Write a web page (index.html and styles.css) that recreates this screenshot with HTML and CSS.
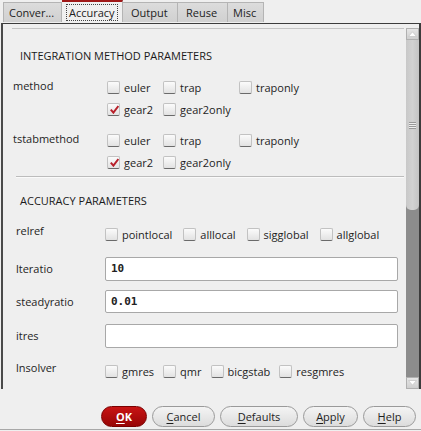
FILE: index.html
```html
<!DOCTYPE html>
<html>
<head>
<meta charset="utf-8">
<link rel="stylesheet" href="styles.css">
</head>
<body>
<div class="dialog">
  <div class="tabs">
    <div class="tab first">Conver...</div>
    <div class="tab active"><span class="focus">Accuracy</span></div>
    <div class="tab">Output</div>
    <div class="tab">Reuse</div>
    <div class="tab">Misc</div>
  </div>
  <div class="frame">
    <div class="viewport">
      <div class="content">
        <div class="title t1">INTEGRATION METHOD PARAMETERS</div>
        <div class="group g1">
          <div class="label">method</div>
          <div class="opts">
            <label class="cb c1"><span class="box"></span>euler</label>
            <label class="cb c2"><span class="box"></span>trap</label>
            <label class="cb c3"><span class="box"></span>traponly</label>
            <label class="cb c1"><span class="box checked"></span>gear2</label>
            <label class="cb c2"><span class="box"></span>gear2only</label>
          </div>
        </div>
        <div class="group g2">
          <div class="label">tstabmethod</div>
          <div class="opts">
            <label class="cb c1"><span class="box"></span>euler</label>
            <label class="cb c2"><span class="box"></span>trap</label>
            <label class="cb c3"><span class="box"></span>traponly</label>
            <label class="cb c1"><span class="box checked"></span>gear2</label>
            <label class="cb c2"><span class="box"></span>gear2only</label>
          </div>
        </div>
        <div class="sep"></div>
        <div class="title t2">ACCURACY PARAMETERS</div>
        <div class="frow relref">
          <div class="label">relref</div>
          <div class="line">
            <label class="cb"><span class="box"></span>pointlocal</label>
            <label class="cb"><span class="box"></span>alllocal</label>
            <label class="cb"><span class="box"></span>sigglobal</label>
            <label class="cb"><span class="box"></span>allglobal</label>
          </div>
        </div>
        <div class="frow field f1">
          <div class="label">lteratio</div>
          <div class="input">10</div>
        </div>
        <div class="frow field f2">
          <div class="label">steadyratio</div>
          <div class="input">0.01</div>
        </div>
        <div class="frow field f3">
          <div class="label">itres</div>
          <div class="input"></div>
        </div>
        <div class="frow lnsolver">
          <div class="label">lnsolver</div>
          <div class="line">
            <label class="cb"><span class="box"></span>gmres</label>
            <label class="cb"><span class="box"></span>qmr</label>
            <label class="cb"><span class="box"></span>bicgstab</label>
            <label class="cb"><span class="box"></span>resgmres</label>
          </div>
        </div>
      </div>
      <div class="scrollbar">
        <div class="arrow up"><svg width="9" height="6" viewBox="0 0 9 6"><path d="M0.5 5.5 L4.5 0.8 L8.5 5.5 Z" fill="#fff" stroke="#c8c8c8" stroke-width="0.8"/></svg></div>
        <div class="track">
          <div class="thumb"><span class="grip"></span></div>
        </div>
        <div class="arrow down"><svg width="9" height="6" viewBox="0 0 9 6"><path d="M0.5 0.5 L4.5 5.2 L8.5 0.5 Z" fill="#fff" stroke="#c8c8c8" stroke-width="0.8"/></svg></div>
      </div>
    </div>
  </div>
  <div class="buttons">
    <button class="btn ok"><u>O</u>K</button>
    <button class="btn cancel"><u>C</u>ancel</button>
    <button class="btn defaults"><u>D</u>efaults</button>
    <button class="btn apply"><u>A</u>pply</button>
    <button class="btn help"><u>H</u>elp</button>
  </div>
  <div class="bottomline"></div>
</div>
</body>
</html>
```

FILE: styles.css
```css
* { box-sizing: border-box; }
html, body { margin: 0; padding: 0; }
body {
  background: #efefef;
  font-family: "Open Sans", "Noto Sans", sans-serif;
  font-size: 11px;
  color: #1e1e1e;
  width: 421px;
  height: 431px;
  overflow: hidden;
}
.dialog { display: flex; flex-direction: column; height: 431px; }

/* tabs */
.tabs {
  display: flex;
  height: 22px;
  padding-left: 3px;
  align-items: flex-end;
}
.tab {
  height: 20px;
  line-height: 19px;
  padding: 0 5px;
  background: linear-gradient(#dcdcdc, #d0d0d0);
  border: 1px solid #b4b4b4;
  border-bottom: none;
  border-left: none;
  color: #222;
}
.tab.first { border-left: 1px solid #b4b4b4; width: 59px; }
.tab.active {
  height: 22px;
  width: 61px;
  background: #f0f0f0;
  border-top: 2px solid #a01818;
  padding: 2px 3px 0 4px;
  line-height: 15px;
}
.focus {
  display: inline-block;
  border: 1px dotted #444;
  padding: 0 2px;
  height: 17px;
}
.tab:nth-child(3) { width: 55px; padding-left: 8px; }
.tab:nth-child(4) { width: 50px; padding-left: 8px; }
.tab:nth-child(5) { width: 36px; padding-left: 5px; }

/* frame */
.frame {
  height: 366px;
  border-top: 1px solid #3c3c3c;
  border-left: 2px solid #4a4a4a;
  border-right: 2px solid #3c3c3c;
  margin-left: 1px;
  padding-top: 4px;
  margin-top: 1px;
}
.viewport { display: flex; height: 361px; }
.content {
  flex: 1;
  border-top: 1px solid #c4c4c4;
  margin-left: 9px;
  padding-top: 18px;
  display: flex;
  flex-direction: column;
}

.title { height: 18px; line-height: 18px; padding-left: 8px; color: #1a1a1a; }
.label { width: 91px; flex: none; line-height: 16px; }

.group { display: flex; padding-left: 1px; }
.g1 { margin-top: 11px; }
.g2 { margin-top: 9px; }
.group .label { padding-top: 2px; }
.opts {
  display: grid;
  grid-template-columns: 56px 76px auto;
  grid-auto-rows: 22px;
  padding-left: 3px;
}

.cb {
  display: flex;
  align-items: center;
  white-space: nowrap;
}
.box {
  width: 13px;
  height: 13px;
  margin-right: 4px;
  border: 1px solid #c2c2c2;
  border-bottom: 1px solid #6a6a6a;
  border-radius: 2px;
  background: linear-gradient(#fbfbfb, #e2e2e2);
  flex: none;
  position: relative;
}
.box.checked::after {
  content: "";
  position: absolute;
  left: 2px;
  top: 1px;
  width: 9px;
  height: 9px;
  background: url("data:image/svg+xml;utf8,<svg xmlns='http://www.w3.org/2000/svg' width='9' height='9' viewBox='0 0 9 9'><path d='M0.8 4.6 L3.4 7.6 L8.4 1' fill='none' stroke='%23b8202a' stroke-width='2'/></svg>") no-repeat;
}

.sep {
  margin-top: 3px;
  margin-left: 4px;
  height: 2px;
  border-top: 1px solid #bcbcbc;
  border-bottom: 1px solid #fafafa;
}
.t2 { margin-top: 14px; }

.frow { display: flex; padding-left: 4px; }
.relref { margin-top: 13px; height: 22px; }
.relref .label, .lnsolver .label { margin-top: 0; }
.line { display: flex; gap: 7px; align-items: center; height: 22px; }
.relref .line { gap: 11px; margin-left: -2px; }

.field { height: 24px; align-items: center; }
.f1 { margin-top: 12px; }
.f2 { margin-top: 9px; height: 23px; }
.f3 { margin-top: 11px; }
.input {
  width: 293px;
  height: 100%;
  margin-left: -2px;
  background: #fff;
  border: 1px solid #a8a8a8;
  border-radius: 2px;
  font-family: "DejaVu Sans Mono", monospace;
  font-weight: bold;
  font-size: 11px;
  line-height: 22px;
  padding-left: 5px;
  color: #222;
}
.lnsolver { margin-top: 12px; height: 22px; }
.lnsolver .line { margin-left: -2px; gap: 9px; }

/* scrollbar */
.scrollbar {
  width: 13px;
  margin-left: 2px;
  display: flex;
  flex-direction: column;
  background: #8c8c8c;
}
.arrow {
  height: 12px;
  background: linear-gradient(#e6e6e6, #cfcfcf);
  display: flex;
  align-items: center;
  justify-content: center;
  border: 1px solid #b0b0b0;
}
.track { flex: 1; }
.thumb {
  height: 170px;
  background: linear-gradient(90deg, #c8c8c8, #d2d2d2, #c4c4c4);
  border-radius: 0 0 5px 5px;
  display: flex;
  align-items: center;
  justify-content: center;
}
.grip {
  width: 7px;
  height: 7px;
  border-top: 1px solid #999;
  border-bottom: 1px solid #999;
  background: repeating-linear-gradient(#eee 0 1px, #999 1px 2px);
}

/* buttons */
.buttons {
  display: flex;
  justify-content: flex-end;
  gap: 5px;
  padding-right: 5px;
  margin-top: 17px;
  height: 21px;
}
.btn {
  font-family: "Open Sans", "Noto Sans", sans-serif;
  font-size: 11px;
  height: 21px;
  padding: 0;
  border-radius: 11px;
  border: 1px solid #9a9a9a;
  background: linear-gradient(#f4f4f4, #dcdcdc);
  color: #1e1e1e;
  line-height: 18px;
}
.btn u { text-decoration-thickness: 1px; text-underline-offset: 2px; }
.ok {
  width: 46px;
  background: linear-gradient(#c81414, #980606);
  border-color: #7a0000;
  color: #fff;
  font-weight: bold;
}
.cancel { width: 63px; }
.defaults { width: 78px; }
.apply { width: 55px; }
.help { width: 53px; }
.bottomline {
  margin-top: 2px;
  height: 1px;
  background: #a8a8a8;
}
```
